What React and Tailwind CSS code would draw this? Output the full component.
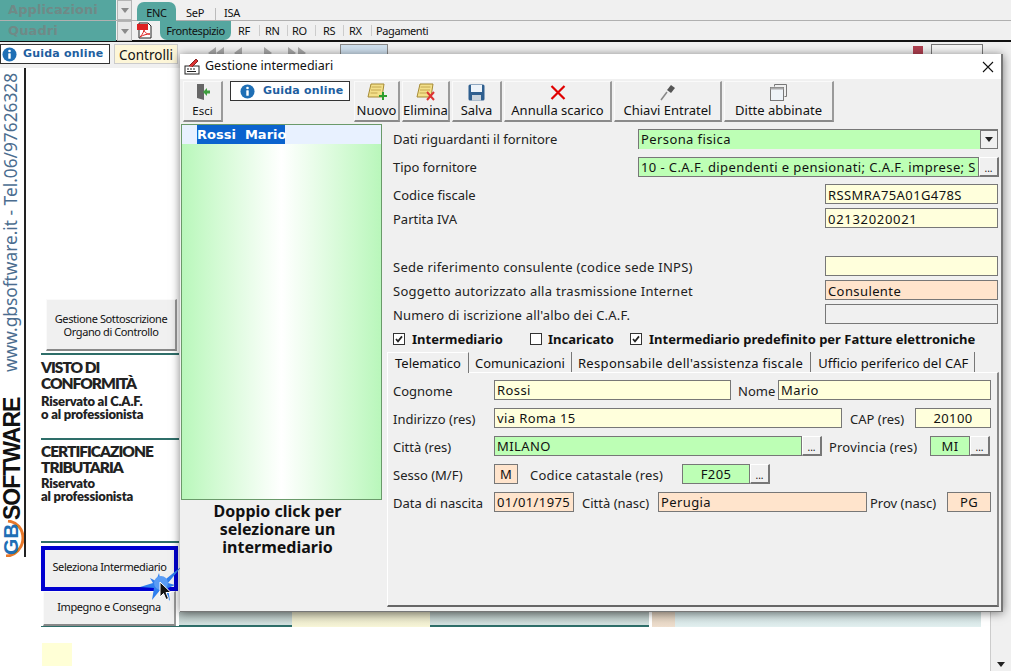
import React from 'react';

const InfoIcon = () => (
  <svg width="15" height="15" viewBox="0 0 16 16" className="shrink-0">
    <circle cx="8" cy="8" r="7.5" fill="#1f6fb5" />
    <circle cx="8" cy="4.2" r="1.4" fill="#fff" />
    <rect x="6.7" y="6.6" width="2.6" height="6" rx="0.6" fill="#fff" />
  </svg>
);

const Guida = ({ className }) => (
  <div className={`flex items-center bg-white border border-[#333] text-[#1f5f9f] font-bold text-[11px] leading-[20px] tracking-[0.2px] whitespace-nowrap font-['DejaVu_Sans',sans-serif] ${className}`}>
    <InfoIcon />
    <span>Guida online</span>
  </div>
);

const Arrow = () => (
  <svg width="8" height="5" viewBox="0 0 8 5"><path d="M0 0h8L4 5z" fill="#222" /></svg>
);

const ComboLeft = ({ label }) => (
  <div className="flex h-[20px] w-[132px]">
    <div className="w-[116px] bg-[#55a69f] pl-[8px] text-[13px] leading-[20px] font-bold text-[#6f8a87] font-['DejaVu_Sans',sans-serif] tracking-[0.1px]">{label}</div>
    <div className="w-[15px] ml-px bg-[#e8e8e8] border border-[#b5b5b5] flex items-center justify-center">
      <svg width="8" height="5" viewBox="0 0 8 5"><path d="M0 0h8L4 5z" fill="#8a8a8a" /></svg>
    </div>
  </div>
);

const Tool = ({ w, label, children }) => (
  <div className={`${w} h-[41px] bg-[#f0f0f0] border-t border-l border-t-[#fafafa] border-l-[#fafafa] border-r-2 border-b-2 border-r-[#9a9a9a] border-b-[#8a8a8a] flex flex-col items-center shrink-0`}>
    <div className="h-[20px] flex items-center justify-center">{children}</div>
    <div className="text-[13px] leading-[16px] text-[#111] whitespace-nowrap">{label}</div>
  </div>
);

const Box = ({ w, color, children, center, className = '' }) => (
  <div className={`${w} ${color} ${center ? 'justify-center' : 'pl-[2px]'} ${className} h-[20px] shrink-0 border border-[#777] flex items-center text-[13px] leading-[18px] tracking-[0.4px] text-[#111] whitespace-nowrap overflow-hidden`}>
    {children}
  </div>
);

const Dots = () => (
  <div className="w-[20px] h-[20px] shrink-0 bg-[#f0f0f0] border-t border-l border-t-white border-l-white border-r-2 border-b-2 border-r-[#777] border-b-[#777] flex items-end justify-center text-[10px] leading-[13px] text-[#111]">...</div>
);

const FormRow = ({ label, className, labelClass = 'pt-[4px]', children }) => (
  <div className={`flex items-center justify-between h-[20px] pl-[8px] text-[13px] text-[#222] ${className}`}>
    <span className={labelClass}>{label}</span>
    {children}
  </div>
);

const TabRow = ({ className = 'mt-[8px]', children }) => (
  <div className={`flex items-center h-[20px] ${className}`}>{children}</div>
);

const Check = ({ on }) => (
  <div className="w-[12px] h-[12px] border border-[#333] bg-white flex items-center justify-center shrink-0">
    {on && (
      <svg width="10" height="10" viewBox="0 0 10 10"><path d="M2 5l2 2.4L8 2.4" fill="none" stroke="#222" strokeWidth="1.7" /></svg>
    )}
  </div>
);

const Paper = ({ children }) => (
  <svg width="22" height="20" viewBox="0 0 22 20">
    <path d="M5 2h13l-2 13H2z" fill="#f3e08a" stroke="#a58a35" />
    <path d="M5.5 5h10M5 8h10M4.500 11h7" stroke="#b89a45" strokeWidth="0.8" />
    {children}
  </svg>
);

const Seller = ({ title, sub, subClass = 'mt-[4px]' }) => (
  <div className="text-[#222] font-['Lato',sans-serif] font-extrabold whitespace-nowrap">
    {title.map((t) => <div key={t} className="text-[15.5px] leading-[16px] tracking-[-1px]">{t}</div>)}
    <div className={subClass}>
      {sub.map((t) => <div key={t} className="text-[13px] leading-[13px] tracking-[-0.2px]">{t}</div>)}
    </div>
  </div>
);

const SideButton = ({ className, children }) => (
  <div className={`bg-[#f0f0f0] border-t border-l border-t-[#fafafa] border-l-[#fafafa] border-r-2 border-b-2 border-r-[#999] border-b-[#888] flex flex-col items-center justify-center text-[11px] tracking-[-0.4px] leading-[13px] text-[#111] ${className}`}>
    {children}
  </div>
);

const Sep = () => <div className="mt-[4px] h-[11px] border-l border-[#ccc]"></div>;

export default function App() {
  return (
    <div className="relative w-[1011px] h-[671px] overflow-hidden bg-white flex flex-col font-['Noto_Sans',sans-serif]">
      {/* barre superiori */}
      <div className="h-[21px] bg-[#f0f0f0] border-b border-[#b0b0b0] flex items-start shrink-0 text-[11px] tracking-[-0.3px]">
        <ComboLeft label="Applicazioni" />
        <div className="ml-[5px] mt-[2px] w-[39px] h-[19px] bg-[#55a69f] rounded-t-[7px] leading-[22px] text-center text-[#111]">ENC</div>
        <div className="ml-[10px] leading-[26px] text-[#111]">SeP</div>
        <div className="ml-[11px] mt-[8px] h-[12px] border-l border-[#bbb]"></div>
        <div className="ml-[8px] leading-[26px] text-[#111]">ISA</div>
      </div>
      <div className="h-[21px] bg-[#f0f0f0] border-b-2 border-[#111] flex items-start shrink-0 text-[11px] tracking-[-0.4px] text-[#111]">
        <ComboLeft label="Quadri" />
        <div className="ml-[5px] mt-[1px] w-[16px] h-[16px]">
          <svg width="16" height="17" viewBox="0 0 16 17">
            <path d="M2 1h9l3 3v12H2z" fill="#fff" stroke="#222" />
            <rect x="0" y="2" width="11" height="6" fill="#d22" />
            <path d="M3 15c3-3 4-6 4-8 0 3 2 5 6 5-3 0-7 1-10 3z" fill="none" stroke="#d22" />
          </svg>
        </div>
        <div className="ml-[7px] w-[71px] h-[19px] bg-[#55a69f] rounded-b-[7px] text-center leading-[19px]">Frontespizio</div>
        <div className="ml-[7px] w-[21px] leading-[20px]">RF</div>
        <Sep />
        <div className="ml-[5px] w-[22px] leading-[20px]">RN</div>
        <Sep />
        <div className="ml-[4px] w-[23px] leading-[20px]">RO</div>
        <Sep />
        <div className="ml-[7px] w-[20px] leading-[20px]">RS</div>
        <Sep />
        <div className="ml-[5px] w-[22px] leading-[20px]">RX</div>
        <Sep />
        <div className="ml-[4px] leading-[20px]">Pagamenti</div>
      </div>
      <div className="h-[26px] bg-[#f0f0f0] flex items-start pt-[2px] shrink-0">
        <Guida className="w-[110px] h-[20px] gap-[6px] pl-[1px]" />
        <div className="ml-[4px] w-[64px] h-[20px] bg-[#fdf6d8] border border-[#ccc] text-[13.5px] leading-[20px] text-center text-[#111]">Controlli</div>
        <div className="ml-[28px] mt-[3px] flex gap-[14px]">
          <svg width="112" height="12" viewBox="0 0 112 12"><path d="M10 0v12L2 6zM18 0v12l-8-6zM36 0v12l-8-6zM58 0v12l8-6zM82 0v12l8-6zM92 0v12l8-6z" fill="#a8a8a8" /></svg>
        </div>
        <div className="ml-[22px] w-[48px] h-[14px] bg-[#cfe0ee] border border-[#888]"></div>
        <div className="ml-[525px] mt-[2px] w-[10px] h-[10px] bg-[#b04050]"></div>
        <div className="ml-[8px] w-[52px] h-[14px] bg-[#f5f5f5] border border-[#777]"></div>
      </div>

      {/* corpo pagina */}
      <div className="flex-1 flex min-h-0">
        <div className="w-[26px] border-r-2 border-[#222] h-[489px] flex flex-col items-start shrink-0 overflow-hidden">
          <div className="mt-[4px] h-[300px] w-[22px] [writing-mode:vertical-rl] rotate-180 text-[17.3px] leading-[22px] text-[#4b6d8f] whitespace-nowrap text-left">
            www.gbsoftware.it - Tel.06/97626328
          </div>
          <div className="h-[125px] w-[24px] mt-[23px] [writing-mode:vertical-rl] rotate-180 text-[23px] leading-[24px] font-bold text-[#111] whitespace-nowrap font-['Liberation_Sans',sans-serif] tracking-[-1px] text-left">
            SOFTWARE
          </div>
          <svg width="24" height="37" viewBox="0 0 24 37" className="shrink-0">
            <path d="M8 1c9 1 15 8 15 17 0 10-8 18-17 18" fill="none" stroke="#e8782a" strokeWidth="3" />
            <text x="0" y="0" transform="translate(18 35) rotate(-90)" fontSize="21" fontWeight="700" fill="#1f6fb5" fontFamily="Liberation Sans, sans-serif">GB</text>
          </svg>
        </div>

        <div className="w-[153px] shrink-0 flex flex-col">
          <SideButton className="ml-[20px] mt-[231px] w-[131px] h-[52px]">
            <div>Gestione Sottoscrizione</div>
            <div>Organo di Controllo</div>
          </SideButton>
          <div className="ml-[15px] mt-[2px] h-[85px] border-t-2 border-[#2e6e69] pt-[4px]">
            <Seller title={['VISTO DI', 'CONFORMITÀ']} sub={['Riservato al C.A.F.', 'o al professionista']} />
          </div>
          <div className="ml-[15px] h-[103px] border-t-2 border-[#2e6e69] pt-[3px]">
            <Seller title={['CERTIFICAZIONE', 'TRIBUTARIA']} sub={['Riservato', 'al professionista']} subClass="mt-[2px]" />
          </div>
          <div className="ml-[15px] border-t-2 border-[#2e6e69] pt-[3px]">
            <div className="w-[137px] h-[45px] border-[4px] border-[#0000d0] bg-[#f0f0f0] flex items-center justify-center pb-[2px] text-[11px] tracking-[-0.4px] text-[#111] whitespace-nowrap">
              Seleziona Intermediario
            </div>
            <SideButton className="ml-[2px] w-[133px] h-[35px] pb-[3px]">Impegno e Consegna</SideButton>
          </div>
          <div className="ml-[15px] h-px bg-[#2e6e69]"></div>
          <div className="ml-[16px] mt-[16px] w-[30px] h-[23px] bg-[#ffffd6]"></div>
        </div>

        {/* striscia sotto la finestra */}
        <div className="flex-1 flex flex-col">
          <div className="mt-[544px] h-[15px] flex">
            <div className="w-[113px] bg-gradient-to-b from-[#a9b5b3] to-[#d3e2e0] border-b-2 border-[#2e6e69]"></div>
            <div className="w-[138px] bg-gradient-to-b from-[#d9d7bc] to-[#f8f6d8]"></div>
            <div className="w-[219px] bg-gradient-to-b from-[#a9b5b3] to-[#d3e2e0] border-b-2 border-[#2e6e69]"></div>
            <div className="w-[3px]"></div>
            <div className="w-[23px] bg-gradient-to-b from-[#d5c6b5] to-[#efdfce]"></div>
            <div className="w-[306px] bg-gradient-to-b from-[#c5d5d5] to-[#e2f0f0]"></div>
          </div>
        </div>

        <div className="w-[21px] shrink-0 bg-[#f0f0f0] border-l border-[#ccc] flex flex-col justify-end">
          <div className="h-[13px] flex items-center justify-center"><Arrow /></div>
        </div>
      </div>

      {/* cursore sul bottone */}
      <svg className="absolute left-[139px] top-[563px] z-10" width="44" height="40" viewBox="0 0 44 40">
        <path d="M22 20L43 3 29 20l7 2-7 3 2 13-9-12-9 11 2-12L1 24l13-4-3-5 6 3 3-8z" fill="#2f7fee" />
        <circle cx="22" cy="20" r="7" fill="#5a9cf5" />
        <path d="M21 19v15l3.500-3.500 2.500 6 2.500-1-2.500-6h5z" fill="#111" stroke="#fff" strokeWidth="1" />
      </svg>

      {/* finestra Gestione intermediari */}
      <div className="absolute left-[180px] top-[54px] z-20 w-[823px] h-[558px] bg-[#f0f0f0] border-r-2 border-b border-[#777] shadow-[0_1px_9px_rgba(0,0,0,0.5)] flex flex-col">
        <div className="h-[25px] bg-white flex items-center shrink-0 pl-[4px]">
          <svg width="17" height="17" viewBox="0 0 17 17">
            <rect x="1" y="8" width="14" height="8" fill="#fff" stroke="#222" />
            <path d="M3 11h2M6 11h2M9 11h2M3 13.500h9" stroke="#222" />
            <path d="M5 8l7-7 2 2-6 6" fill="#d33" stroke="#822" />
          </svg>
          <span className="ml-[4px] text-[12.5px] text-[#111]">Gestione intermediari</span>
          <svg className="ml-auto mr-[7px]" width="12" height="12" viewBox="0 0 12 12"><path d="M1 1l10 10M11 1L1 11" stroke="#111" strokeWidth="1.1" /></svg>
        </div>

        <div className="h-[45px] flex items-start pt-[2px] pl-[3px] shrink-0">
          <Tool w="w-[40px]" label={<span className="text-[11.5px]">Esci</span>}>
            <svg width="16" height="19" viewBox="0 0 16 19">
              <path d="M2 1h7v16l-7-2z" fill="#666" />
              <path d="M8 9l4-4v2.500h3v3h-3V13z" fill="#3f9f3f" />
            </svg>
          </Tool>
          <Guida className="ml-[7px] w-[120px] h-[20px] gap-[8px] pl-[9px]" />
          <div className="ml-[4px] flex gap-[2px]">
            <Tool w="w-[46px]" label="Nuovo">
              <Paper><path d="M13 13h3v-3h2v3h3v2h-3v3h-2v-3h-3z" fill="#2e9e2e" /></Paper>
            </Tool>
            <Tool w="w-[48px]" label="Elimina">
              <Paper><path d="M12 10l7 8M19 10l-7 8" stroke="#d33" strokeWidth="2" /></Paper>
            </Tool>
            <Tool w="w-[50px]" label="Salva">
              <svg width="17" height="17" viewBox="0 0 17 17">
                <rect x="0.500" y="0.500" width="16" height="16" rx="1.500" fill="#2f5f8f" />
                <rect x="3" y="1" width="11" height="7" fill="#eef4fa" />
                <rect x="4" y="11" width="9" height="5.500" fill="#c9d3dc" />
              </svg>
            </Tool>
            <Tool w="w-[108px]" label="Annulla scarico">
              <svg width="16" height="15" viewBox="0 0 16 15"><path d="M1.500 1l13 13M14.500 1l-13 13" stroke="#e00000" strokeWidth="2.200" /></svg>
            </Tool>
            <Tool w="w-[108px]" label="Chiavi Entratel">
              <svg width="16" height="17" viewBox="0 0 16 17">
                <path d="M1 16l6-8" stroke="#888" strokeWidth="1.500" />
                <path d="M7 6l4-5 4 3-4 5z" fill="#555" />
              </svg>
            </Tool>
            <Tool w="w-[110px]" label="Ditte abbinate">
              <svg width="17" height="17" viewBox="0 0 17 17">
                <path d="M4.500 2.500V.5h12v12h-2" fill="none" stroke="#777" />
                <rect x="0.500" y="3.500" width="13" height="13" fill="#eef3f8" stroke="#777" />
                <rect x="0.500" y="3.500" width="13" height="2" fill="#aaa" />
              </svg>
            </Tool>
          </div>
        </div>

        <div className="flex-1 flex min-h-0">
          {/* elenco */}
          <div className="w-[205px] shrink-0 pl-px flex flex-col">
            <div className="w-[201px] h-[376px] border border-[#6a9a6a] bg-gradient-to-r from-[#b9f7bb] via-[#ffffff] to-[#b9f7bb]">
              <div className="h-[19px] bg-[#e8f1ff] pl-[15px] flex">
                <div className="w-[88px] h-[19px] bg-[#0b63ce] text-white font-bold text-[13px] leading-[20px] whitespace-nowrap font-['DejaVu_Sans',sans-serif]">Rossi&nbsp; Mario</div>
              </div>
            </div>
            <div className="w-[193px] mt-[2px] text-center text-[16px] leading-[18px] font-bold text-[#111]">
              Doppio click per<br />selezionare un<br />intermediario
            </div>
          </div>

          {/* dati fornitore */}
          <div className="w-[613px] shrink-0 pt-[5px] flex flex-col">
            <FormRow label="Dati riguardanti il fornitore" labelClass="pt-[2px]">
              <div className="w-[360px] h-[20px] bg-[#bdffb5] border-t border-l border-[#777] flex items-center pl-[2px] text-[13px] tracking-[0.4px] text-[#111] relative">
                Persona fisica
                <div className="absolute right-0 top-0 w-[18px] h-[19px] bg-[#f0f0f0] border border-[#777] flex items-center justify-center"><Arrow /></div>
              </div>
            </FormRow>
            <FormRow label="Tipo fornitore" className="mt-[8px]" labelClass="pt-[2px]">
              <div className="flex w-[360px]">
                <Box w="w-[341px]" color="bg-[#bdffb5]">10 - C.A.F. dipendenti e pensionati; C.A.F. imprese; S</Box>
                <Dots />
              </div>
            </FormRow>
            <FormRow label="Codice fiscale" className="mt-[7px]">
              <Box w="w-[173px]" color="bg-[#ffffdc]" className="pt-[2px]">RSSMRA75A01G478S</Box>
            </FormRow>
            <FormRow label="Partita IVA" className="mt-[4px]">
              <Box w="w-[173px]" color="bg-[#ffffdc]" className="pt-[2px] tracking-[0.7px]">02132020021</Box>
            </FormRow>
            <FormRow label="Sede riferimento consulente (codice sede INPS)" className="mt-[28px] tracking-[0.25px]">
              <Box w="w-[173px]" color="bg-[#ffffdc]" />
            </FormRow>
            <FormRow label="Soggetto autorizzato alla trasmissione Internet" className="mt-[4px] tracking-[0.28px]">
              <Box w="w-[173px]" color="bg-[#ffe4cc]" className="pt-[2px]">Consulente</Box>
            </FormRow>
            <FormRow label="Numero di iscrizione all'albo dei C.A.F." className="mt-[4px] tracking-[0.17px]">
              <Box w="w-[173px]" color="bg-[#f0f0f0]" />
            </FormRow>

            <div className="mt-[7px] h-[16px] pl-[8px] flex items-center text-[13px] font-bold text-[#111]">
              <Check on />
              <span className="ml-[7px] w-[118px] pt-[2px]">Intermediario</span>
              <Check />
              <span className="ml-[6px] w-[82px] pt-[2px]">Incaricato</span>
              <Check on />
              <span className="ml-[7px] pt-[2px] whitespace-nowrap">Intermediario predefinito per Fatture elettroniche</span>
            </div>

            <div className="mt-[5px] h-[20px] pl-[2px] flex text-[13px] text-[#111] relative whitespace-nowrap">
              <div className="w-[82px] h-[21px] bg-[#f0f0f0] border-t border-l border-r border-t-white border-l-white border-r-[#777] text-center leading-[20px] z-10">Telematico</div>
              <div className="pl-[6px] pr-[6px] border-r border-[#777] leading-[22px]">Comunicazioni</div>
              <div className="pl-[6px] pr-[7px] border-r border-[#777] leading-[22px] tracking-[0.33px]">Responsabile dell'assistenza fiscale</div>
              <div className="pl-[7px] pr-[6px] border-r border-[#777] leading-[22px]">Ufficio periferico del CAF</div>
            </div>

            <div className="ml-[2px] w-[612px] h-[235px] border-t border-l border-t-white border-l-white border-r-2 border-b-2 border-r-[#888] border-b-[#666] pl-[5px] pt-[7px] text-[13px] text-[#222]">
              <TabRow className="">
                <span className="w-[101px] pt-[3px]">Cognome</span>
                <Box w="w-[237px]" color="bg-[#ffffdc]">Rossi</Box>
                <span className="ml-[7px] w-[40px] pt-[3px]">Nome</span>
                <Box w="w-[213px]" color="bg-[#ffffdc]">Mario</Box>
              </TabRow>
              <TabRow>
                <span className="w-[101px] pt-[3px]">Indirizzo (res)</span>
                <Box w="w-[348px]" color="bg-[#ffffdc]">via Roma 15</Box>
                <span className="ml-[8px] w-[65px] pt-[3px]">CAP (res)</span>
                <Box w="w-[76px]" color="bg-[#ffffdc]" center>20100</Box>
              </TabRow>
              <TabRow>
                <span className="w-[101px] pt-[3px]">Città (res)</span>
                <Box w="w-[308px]" color="bg-[#bdffb5]">MILANO</Box>
                <Dots />
                <span className="ml-[7px] w-[101px] pt-[3px] tracking-[0.2px]">Provincia (res)</span>
                <Box w="w-[40px]" color="bg-[#bdffb5]" center>MI</Box>
                <Dots />
              </TabRow>
              <TabRow>
                <span className="w-[101px] pt-[3px]">Sesso (M/F)</span>
                <Box w="w-[24px]" color="bg-[#ffe4cc]" center>M</Box>
                <span className="ml-[12px] w-[152px] pt-[3px] tracking-[0.2px]">Codice catastale (res)</span>
                <Box w="w-[68px]" color="bg-[#bdffb5]" center>F205</Box>
                <Dots />
              </TabRow>
              <TabRow>
                <span className="w-[101px] pt-[3px]">Data di nascita</span>
                <Box w="w-[80px]" color="bg-[#ffe4cc]">01/01/1975</Box>
                <span className="ml-[8px] w-[76px] pt-[3px]">Città (nasc)</span>
                <Box w="w-[209px]" color="bg-[#ffe4cc]">Perugia</Box>
                <span className="ml-[3px] w-[77px] pt-[3px]">Prov (nasc)</span>
                <Box w="w-[44px]" color="bg-[#ffe4cc]" center>PG</Box>
              </TabRow>
            </div>
          </div>
        </div>
      </div>
    </div>
  );
}
